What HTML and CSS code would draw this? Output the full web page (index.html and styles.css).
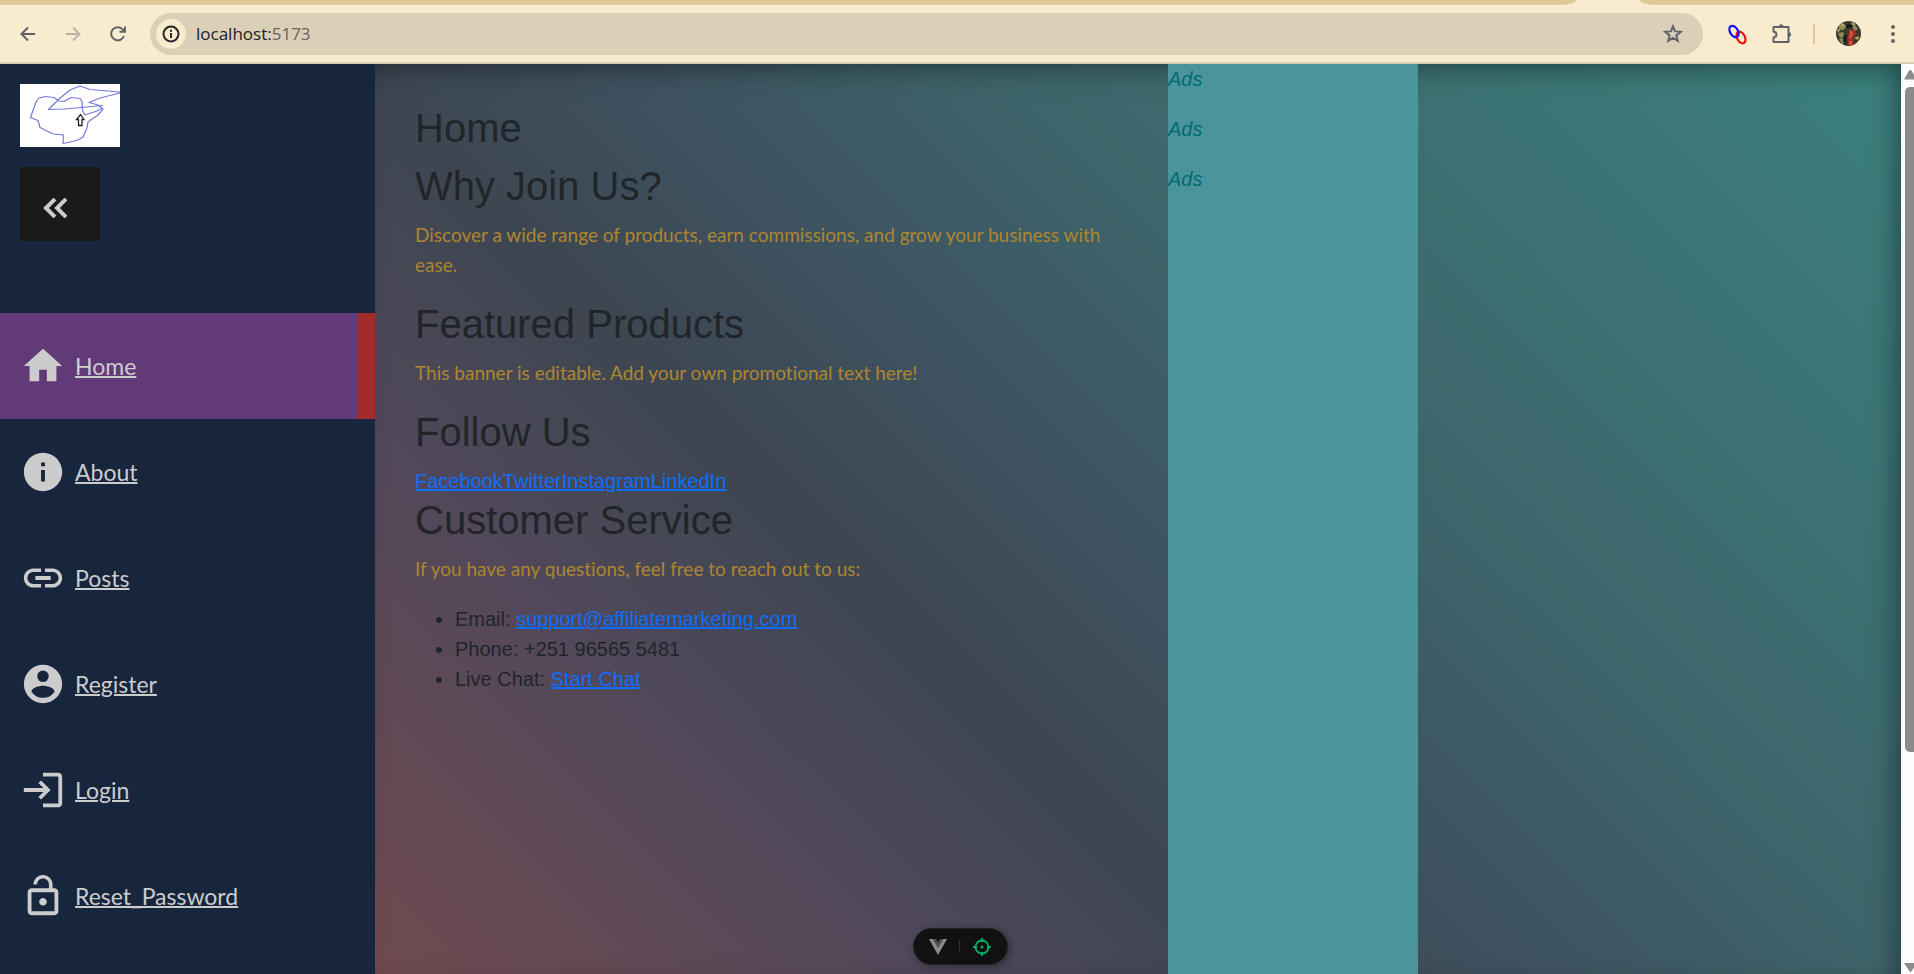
FILE: index.html
```
<!DOCTYPE html>
<html lang="en">
<head>
<meta charset="utf-8">
<title>Home</title>
<link rel="stylesheet" href="styles.css">
</head>
<body>
<div class="window">
  <div class="tabstrip"><span class="tab-edge"></span><span class="tab-gap"></span><span class="tab-rest"></span></div>
  <header class="toolbar">
    <div class="nav-buttons">
      <button class="tool" aria-label="Back"><svg width="16" height="16" viewBox="0 0 16 16"><path d="M15 8H2M8 1.500 1.500 8 8 14.500"/></svg></button>
      <button class="tool dim" aria-label="Forward"><svg width="16" height="16" viewBox="0 0 16 16"><path d="M1 8h13M8 1.500 14.500 8 8 14.500"/></svg></button>
      <button class="tool" aria-label="Reload"><svg width="16" height="16" viewBox="0 0 16 16"><path d="M14 10A6.600 6.600 0 1 1 13 3.700L15 5.700M15 .5v5.200H9.500"/></svg></button>
    </div>
    <div class="address">
      <button class="site-info" aria-label="Site information"><svg width="18" height="18" viewBox="0 0 18 18"><circle cx="9" cy="9" r="7.500"/><path d="M9 8v5M9 4.800v1.900"/></svg></button>
      <div class="url">localhost:<span class="port">5173</span></div>
      <button class="tool" aria-label="Bookmark"><svg width="20" height="20" viewBox="0 0 20 20"><path d="m10 2.300 2.100 5.100 5.600.4-4.300 3.600 1.400 5.500L10 14l-4.800 2.900 1.400-5.500-4.300-3.600 5.600-.4z"/></svg></button>
    </div>
    <div class="extensions">
      <button class="tool" aria-label="Link extension"><svg width="22" height="22" viewBox="0 0 22 22"><ellipse cx="14" cy="14.500" rx="3.900" ry="6.200" transform="rotate(-27 14 14.500)" stroke="#f00d0d" stroke-width="2.200"/><ellipse cx="7" cy="8.500" rx="3.900" ry="6.200" transform="rotate(-32 7 8.500)" stroke="#1414f5" stroke-width="2.200"/></svg></button>
      <button class="tool" aria-label="Extensions"><svg width="22" height="22" viewBox="0 0 22 22"><path d="M3.500 4h15v15h-15v-4.500c4-.5 4-5.500 0-6z" stroke-linejoin="round"/><path d="M9 3.500a2.200 2.200 0 0 1 4.400 0zM19 9.300a2.200 2.200 0 0 1 0 4.400z" fill="#5f6368" stroke="none"/></svg></button>
      <span class="separator"></span>
      <button class="tool" aria-label="Profile"><svg width="25" height="25" viewBox="0 0 25 25"><defs><clipPath id="face"><circle cx="12.500" cy="12.500" r="12.500"/></clipPath></defs><g clip-path="url(#face)" stroke="none"><path fill="#3b3a2c" d="M0 0h25v25H0z"/><path fill="#8b8b58" d="M3 3h5l3 3-4 3H3zM2 12l5-1 2 4-5 2zM19 4l3 4-3 2-3-4zM3 18l4-1 2 4-3 2z"/><path fill="#b9ac72" d="m5 1 4 3-3 2zM1 8l3 1-2 3zM18 17l5-2-1 4zM15 1l5 2-3 2z"/><path fill="#a12d2b" d="m13 8 5 1 3 4-4 3 1 8h-6l-1-7 2-4z"/><path fill="#d9523d" d="m14 9 3 2-1 5-3 2zM13 20h3v4h-3z"/><path fill="#171d1b" d="m10 4 4-1 3 2-2 2h-5zM8 13l3 2-1 9-3-4z"/></g></svg></button>
      <button class="tool more" aria-label="Menu"><svg width="6" height="20" viewBox="0 0 6 20"><g fill="#5f6368" stroke="none"><circle cx="3" cy="3" r="2"/><circle cx="3" cy="10" r="2"/><circle cx="3" cy="17" r="2"/></g></svg></button>
    </div>
  </header>
  <div class="page">
    <aside class="sidebar">
      <svg class="logo" width="100" height="63" viewBox="0 0 100 63"><path fill="#fff" d="M0 0h100v63H0z"/><path fill="none" stroke="#737adb" stroke-width="1.200" stroke-linejoin="round" d="M100 8 70 5.500 60 2 50 6 39 15 28.500 25.500 45 25l38-3.500M100 9 80 14l-11 4.500 9 2.500 5 4-5 6-10 7-1 6-4 9-6 3.500L43 59.500 43.500 51 33 50 20 43.500l-2-7-7.500-3L16 18l3-4 6-1.500 9 1L39 17l5 .5 7-4 9 1 2 3 .5 9L65 31l12-4 5-3"/><path fill="#fff" stroke="#222" stroke-width="1.300" d="m60.500 30.500 3.500 5h-2V41.500h-3.500v-6h-2z"/></svg>
      <button class="collapse" aria-label="Collapse menu"><svg width="24" height="20" viewBox="0 0 24 20"><path d="M12 1 3 10l9 9M23 1l-9 9 9 9"/></svg></button>
      <nav class="menu">
        <a class="item active" href="#"><svg class="icon" viewBox="0 0 24 24"><path d="M10 20v-6h4v6h5v-8h3L12 3 2 12h3v8z"/></svg><span class="label">Home</span></a>
        <a class="item" href="#"><svg class="icon" viewBox="0 0 24 24"><path d="M12 2C6.480 2 2 6.480 2 12s4.480 10 10 10 10-4.480 10-10S17.520 2 12 2zm1 15h-2v-6h2v6zm0-8h-2V7h2v2z"/></svg><span class="label">About</span></a>
        <a class="item" href="#"><svg class="icon" viewBox="0 0 24 24"><path d="M3.900 12c0-1.710 1.390-3.100 3.100-3.100h4V7H7c-2.760 0-5 2.240-5 5s2.240 5 5 5h4v-1.900H7c-1.710 0-3.100-1.390-3.100-3.100zM8 13h8v-2H8v2zm9-6h-4v1.900h4c1.710 0 3.100 1.390 3.100 3.100s-1.390 3.100-3.100 3.100h-4V17h4c2.760 0 5-2.240 5-5s-2.240-5-5-5z"/></svg><span class="label">Posts</span></a>
        <a class="item" href="#"><svg class="icon" viewBox="0 0 24 24"><path fill-rule="evenodd" d="M12 2a10 10 0 1 0 0 20 10 10 0 0 0 0-20zm0 3a3 3 0 1 1 0 6 3 3 0 0 1 0-6zm0 14.200c-2.500 0-4.710-1.280-6-3.220.03-1.990 4-3.080 6-3.080s5.970 1.090 6 3.080a7.200 7.200 0 0 1-6 3.220z"/></svg><span class="label">Register</span></a>
        <a class="item" href="#"><svg class="icon" viewBox="0 0 24 24"><path d="M11 7 9.600 8.400l2.600 2.600H2v2h10.200l-2.600 2.600L11 17l5-5zm9 12h-8v2h8c1.100 0 2-.9 2-2V5c0-1.100-.9-2-2-2h-8v2h8z"/></svg><span class="label">Login</span></a>
        <a class="item" href="#"><svg class="icon" viewBox="0 0 24 24"><path d="M12 17c1.100 0 2-.9 2-2s-.9-2-2-2-2 .9-2 2 .9 2 2 2zm6-9h-1V6c0-2.760-2.240-5-5-5S7 3.240 7 6h1.900c0-1.710 1.390-3.100 3.100-3.100s3.100 1.390 3.100 3.100v2H6c-1.100 0-2 .9-2 2v10c0 1.100.9 2 2 2h12c1.100 0 2-.9 2-2V10c0-1.100-.9-2-2-2zm0 12H6V10h12v10z"/></svg><span class="label">Reset_Password</span></a>
      </nav>
    </aside>
    <div class="stage">
      <main class="content">
        <h1>Home</h1>
        <h2>Why Join Us?</h2>
        <p>Discover a wide range of products, earn commissions, and grow your business with ease.</p>
        <h2>Featured Products</h2>
        <p>This banner is editable. Add your own promotional text here!</p>
        <h2>Follow Us</h2>
        <div class="social"><a href="#">Facebook</a><a href="#">Twitter</a><a href="#">Instagram</a><a href="#">LinkedIn</a></div>
        <h2>Customer Service</h2>
        <p>If you have any questions, feel free to reach out to us:</p>
        <ul>
          <li>Email: <a href="#">support@affiliatemarketing.com</a></li>
          <li>Phone: +251 96565 5481</li>
          <li>Live Chat: <a href="#">Start Chat</a></li>
        </ul>
      </main>
      <aside class="ads"><em>Ads</em><em>Ads</em><em>Ads</em></aside>
    </div>
    <div class="scrollbar">
      <svg width="13" height="12" viewBox="0 0 13 12"><path d="M3 10.500 8.500 1 10 1l6 9.500z"/></svg>
      <div class="track"><div class="thumb"></div></div>
      <svg width="13" height="12" viewBox="0 0 13 12"><path d="M3 1h13L9.800 10H9z"/></svg>
    </div>
  </div>
  <div class="devtools">
    <button class="dev" aria-label="Vue DevTools"><svg width="18" height="16" viewBox="0 0 18 16"><path fill="#8b8b8b" d="M0 0h4l5 8.500L14 0h4L9 16z"/><path fill="#505050" d="M4 0h3l2 3.500L11 0h3L9 8.500z"/></svg></button>
    <span class="dev-line"></span>
    <button class="dev" aria-label="Component inspector"><svg width="20" height="20" viewBox="0 0 20 20"><g fill="none" stroke="#0bad68" stroke-width="1.800"><circle cx="10" cy="10" r="6.500"/><path d="M10 1v4M10 15v4M1 10h4M15 10h4"/></g><circle cx="10" cy="10" r="1.500" fill="#0bad68"/></svg></button>
  </div>
</div>
</body>
</html>
```
FILE: styles.css
```
* { box-sizing: border-box; }
body { margin: 0; font: 20px/30px "Liberation Sans", Arial, sans-serif; color: #212529; }
button { border: 0; padding: 0; background: none; display: flex; align-items: center; justify-content: center; cursor: pointer; }
svg { display: block; flex: none; }
.window { height: 100vh; display: flex; flex-direction: column; overflow: hidden; position: relative; background: #f8ebce; }
.tabstrip { height: 5px; display: flex; background: #f8ebce; flex: none; }
.tab-edge { flex: 1; background: #dfc996; border-bottom-right-radius: 16px 5px; }
.tab-gap { width: 64px; }
.tab-rest { width: 274px; background: #dfc996; border-bottom-left-radius: 16px 5px; }
.toolbar { height: 59px; flex: none; display: flex; align-items: center; padding: 0 18px 0 20px; border-bottom: 2px solid #d9cfb6; background: #f8ebce; border-top-left-radius: 10px; }
.nav-buttons { display: flex; gap: 29px; width: 130px; }
.tool svg { fill: none; stroke: #5f6368; stroke-width: 2; }
.dim { opacity: .4; }
.address { flex: 1; height: 42px; border-radius: 21px; background: #dbcfb8; display: flex; align-items: center; padding: 0 20px 0 6px; }
.site-info { width: 30px; height: 30px; border-radius: 50%; background: #f8ebce; }
.site-info svg { fill: none; stroke: #25262a; stroke-width: 2; }
.url { flex: 1; margin-left: 10px; font: 17px/24px "Open Sans", "Noto Sans", sans-serif; color: #202127; }
.port { color: #66625d; }
.extensions { display: flex; align-items: center; gap: 21px; margin-left: 24px; }
.more { margin-left: 8px; }
.separator { width: 2px; height: 20px; background: #dfc996; }
.page { flex: 1; min-height: 0; display: flex; }
.sidebar { width: 375px; flex: none; background: #17263c; display: flex; flex-direction: column; }
.logo { margin: 20px 20px 0; }
.collapse { width: 80px; height: 74px; margin: 20px 20px 0; padding-right: 10px; padding-top: 8px; background: #1a1a1a; }
.collapse svg { fill: none; stroke: #ccc; stroke-width: 4; }
.menu { margin-top: 72px; }
.item { height: 106px; display: flex; align-items: center; padding-left: 20px; gap: 9px; color: #ccc; text-decoration: none; }
.item.active { background: #633a78; border-right: 18px solid #a52a2a; }
.icon { width: 46px; height: 46px; fill: #ccc; }
.label { font: 23px/36px Lato, "Gill Sans MT", sans-serif; text-decoration: underline; text-decoration-thickness: 2px; }
.stage { flex: 1; display: flex; min-width: 0; background: linear-gradient(45deg, #704a50, #50485a 23%, #3d4651 36%, #3e515f 47%, #3d646a 62%, #3b817d); box-shadow: inset -10px 10px 30px -10px #0008; }
.content { flex: 0 1 793px; padding: 40px; }
h1, h2 { margin: 0 0 10px; font-size: 40px; line-height: 48px; font-weight: 400; }
p { margin: 0 0 20px; font-family: Lato, "Gill Sans MT", sans-serif; font-size: 19px; font-variant-ligatures: none; color: #ae862f; }
.social { display: flex; }
.content a { color: #0d6efd; text-decoration-thickness: 2px; }
ul { margin: 0; padding-left: 40px; }
.ads { width: 250px; flex: none; background: #4b949b; color: #006b75; display: flex; flex-direction: column; gap: 20px; }
.scrollbar { width: 13px; flex: none; background: #fcfcfc; display: flex; flex-direction: column; justify-content: space-between; padding: 5px 0 0; }
.scrollbar svg { fill: #8b8b8b; }
.track { flex: 1; padding: 6px 0 0 4px; }
.thumb { height: 76%; background: #8b8b8b; border-radius: 5px 0 0 5px; }
.devtools { position: absolute; left: 50%; bottom: 9px; width: 95px; height: 37px; transform: translateX(-44px); border-radius: 19px; border: 1px solid #222; background: #111; display: flex; align-items: center; justify-content: space-between; padding: 0 15px; box-shadow: 2px 2px 8px #0006; }
.dev-line { width: 1px; height: 13px; background: #333; }
```
